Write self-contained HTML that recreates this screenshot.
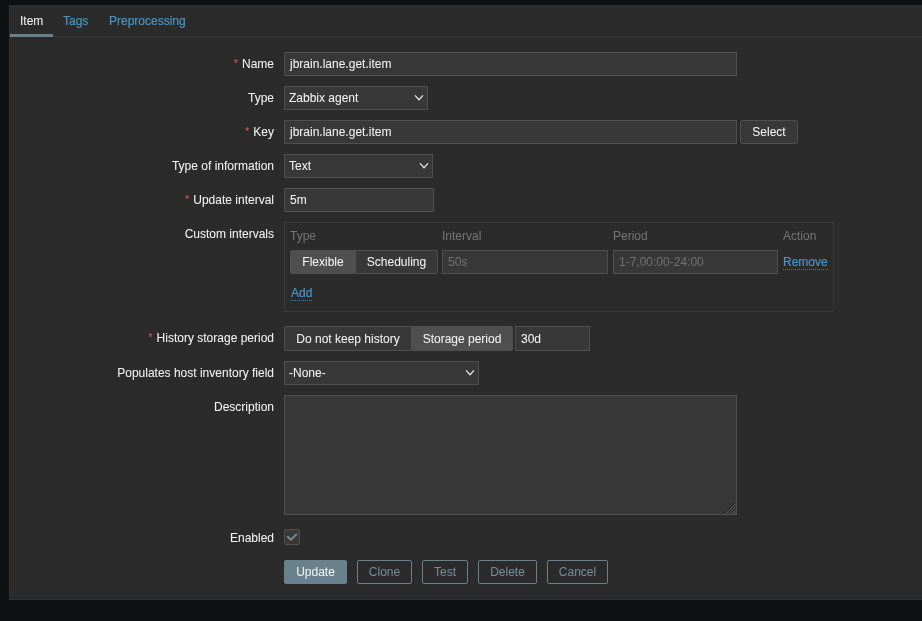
<!DOCTYPE html>
<html lang="en">
<head>
<meta charset="utf-8">
<title>Item</title>
<style>
*{box-sizing:border-box;margin:0;padding:0}
html,body{width:922px;height:621px;overflow:hidden;background:#0e1012}
body{font-family:"Liberation Sans",Arial,sans-serif;font-size:12px;line-height:14px;color:#f2f2f2;position:relative;-webkit-text-stroke:0.05px currentColor}
.panel{will-change:transform;position:absolute;left:9px;top:5px;width:930px;height:595px;background:#2b2b2b;border:1px solid #303030}
.tabs{position:absolute;left:0;top:0;right:0;height:31px;border-bottom:1px solid #383838}
.tab{-webkit-text-stroke:0.2px currentColor;position:absolute;top:0;height:31px;line-height:14px;padding-top:8px;color:#4796c4;white-space:nowrap}
.tab.sel{-webkit-text-stroke:0.05px currentColor;color:#f2f2f2;border-bottom:3px solid #69808d}
.abs{position:absolute;white-space:nowrap}
.lbl{position:absolute;left:0;width:264px;text-align:right;white-space:nowrap;height:14px;line-height:14px}
.req:before{content:"*";color:#e45959;margin-right:4px;display:inline-block;-webkit-text-stroke:0;font-size:11px;line-height:14px;vertical-align:top;position:relative;top:-1px}
.inp{position:absolute;height:24px;background:#383838;border:1px solid #4f4f4f;line-height:14px;padding:4px 5px;color:#f2f2f2;white-space:nowrap;overflow:hidden}
.sel{padding-left:4px}
.dis{color:#707070}
.chev{position:absolute;right:3px;top:7px;width:10px;height:8px}
.btn{position:absolute;height:24px;line-height:14px;padding:4px 0;text-align:center;border:1px solid #4f4f4f;background:#383838;color:#f2f2f2}
.btn.on{background:#4f4f4f}
.alt{background:transparent;border-color:#69808d;color:#768d99;border-radius:2px}
.pri{background:#69808d;border-color:#69808d;color:#f2f2f2;border-radius:2px}
.link{-webkit-text-stroke:0.2px currentColor;position:absolute;color:#4796c4;border-bottom:1px dotted rgba(71,150,196,.75);line-height:14px;height:15px}
.hdr{position:absolute;color:#737373;line-height:14px}
.box{position:absolute;left:274px;top:216px;width:550px;height:90px;border:1px solid #383838}
</style>
</head>
<body>
<div class="panel">
  <div class="tabs">
    <div class="tab sel" style="left:0;width:43px;padding-left:10px">Item</div>
    <div class="tab" style="left:53px">Tags</div>
    <div class="tab" style="left:99px">Preprocessing</div>
  </div>

  <div class="lbl req" style="top:51px">Name</div>
  <div class="inp" style="left:274px;top:46px;width:453px">jbrain.lane.get.item</div>

  <div class="lbl" style="top:85px">Type</div>
  <div class="inp sel" style="left:274px;top:80px;width:144px">Zabbix agent<svg class="chev" viewBox="0 0 10 8"><path d="M1 1.3 L5 5.7 L9 1.3" fill="none" stroke="#e6e6e6" stroke-width="1.25"/></svg></div>

  <div class="lbl req" style="top:119px">Key</div>
  <div class="inp" style="left:274px;top:114px;width:453px">jbrain.lane.get.item</div>
  <div class="btn" style="left:730px;top:114px;width:58px;border-radius:2px">Select</div>

  <div class="lbl" style="top:153px">Type of information</div>
  <div class="inp sel" style="left:274px;top:148px;width:149px">Text<svg class="chev" viewBox="0 0 10 8"><path d="M1 1.3 L5 5.7 L9 1.3" fill="none" stroke="#e6e6e6" stroke-width="1.25"/></svg></div>

  <div class="lbl req" style="top:187px">Update interval</div>
  <div class="inp" style="left:274px;top:182px;width:150px">5m</div>

  <div class="lbl" style="top:221px">Custom intervals</div>
  <div class="box"></div>
  <div class="hdr" style="left:280px;top:223px">Type</div>
  <div class="hdr" style="left:432px;top:223px">Interval</div>
  <div class="hdr" style="left:603px;top:223px">Period</div>
  <div class="hdr" style="left:773px;top:223px">Action</div>
  <div class="btn on" style="left:280px;top:244px;width:66px;border-radius:2px 0 0 2px">Flexible</div>
  <div class="btn" style="left:345px;top:244px;width:83px;border-radius:0 2px 2px 0">Scheduling</div>
  <div class="inp dis" style="left:432px;top:244px;width:166px">50s</div>
  <div class="inp dis" style="left:603px;top:244px;width:165px">1-7,00:00-24:00</div>
  <div class="link" style="left:773px;top:249px">Remove</div>
  <div class="link" style="left:281px;top:280px">Add</div>

  <div class="lbl req" style="top:325px">History storage period</div>
  <div class="btn" style="left:274px;top:320px;width:128px;height:25px;padding-top:5px;border-radius:2px 0 0 2px">Do not keep history</div>
  <div class="btn on" style="left:401px;top:320px;width:102px;height:25px;padding-top:5px;border-radius:0 2px 2px 0">Storage period</div>
  <div class="inp" style="left:505px;top:320px;width:75px;height:25px;padding-top:5px">30d</div>

  <div class="lbl" style="top:360px">Populates host inventory field</div>
  <div class="inp sel" style="left:274px;top:355px;width:195px">-None-<svg class="chev" viewBox="0 0 10 8"><path d="M1 1.3 L5 5.7 L9 1.3" fill="none" stroke="#e6e6e6" stroke-width="1.25"/></svg></div>

  <div class="lbl" style="top:394px">Description</div>
  <div class="inp" style="left:274px;top:389px;width:453px;height:120px"><svg width="12" height="12" viewBox="0 0 12 12" style="position:absolute;right:0;bottom:0"><g fill="none" stroke-width="1"><path d="M0.6 11.2 L10.9 0.9 M3.6 11.2 L10.9 3.9 M6.6 11.2 L10.9 6.9" stroke="#1c1c1c"/><path d="M1.8 11.5 L11.5 1.8 M4.8 11.5 L11.5 4.8 M7.8 11.5 L11.5 7.8 M10.6 11.6 L11.6 10.6" stroke="#666"/></g></svg></div>

  <div class="lbl" style="top:525px">Enabled</div>
  <div class="abs" style="left:274px;top:523px;width:16px;height:16px;background:#383838;border:1px solid #4f4f4f;border-radius:2px"><svg width="14" height="14" viewBox="0 0 14 14" style="display:block"><path d="M2.8 6.8 L5.8 9.7 L11.4 4.4" fill="none" stroke="#768d99" stroke-width="1.9" stroke-linecap="round" stroke-linejoin="round"/></svg></div>

  <div class="btn pri" style="left:274px;top:554px;width:63px">Update</div>
  <div class="btn alt" style="left:347px;top:554px;width:55px">Clone</div>
  <div class="btn alt" style="left:412px;top:554px;width:46px">Test</div>
  <div class="btn alt" style="left:468px;top:554px;width:59px">Delete</div>
  <div class="btn alt" style="left:537px;top:554px;width:61px">Cancel</div>
</div>
</body>
</html>
